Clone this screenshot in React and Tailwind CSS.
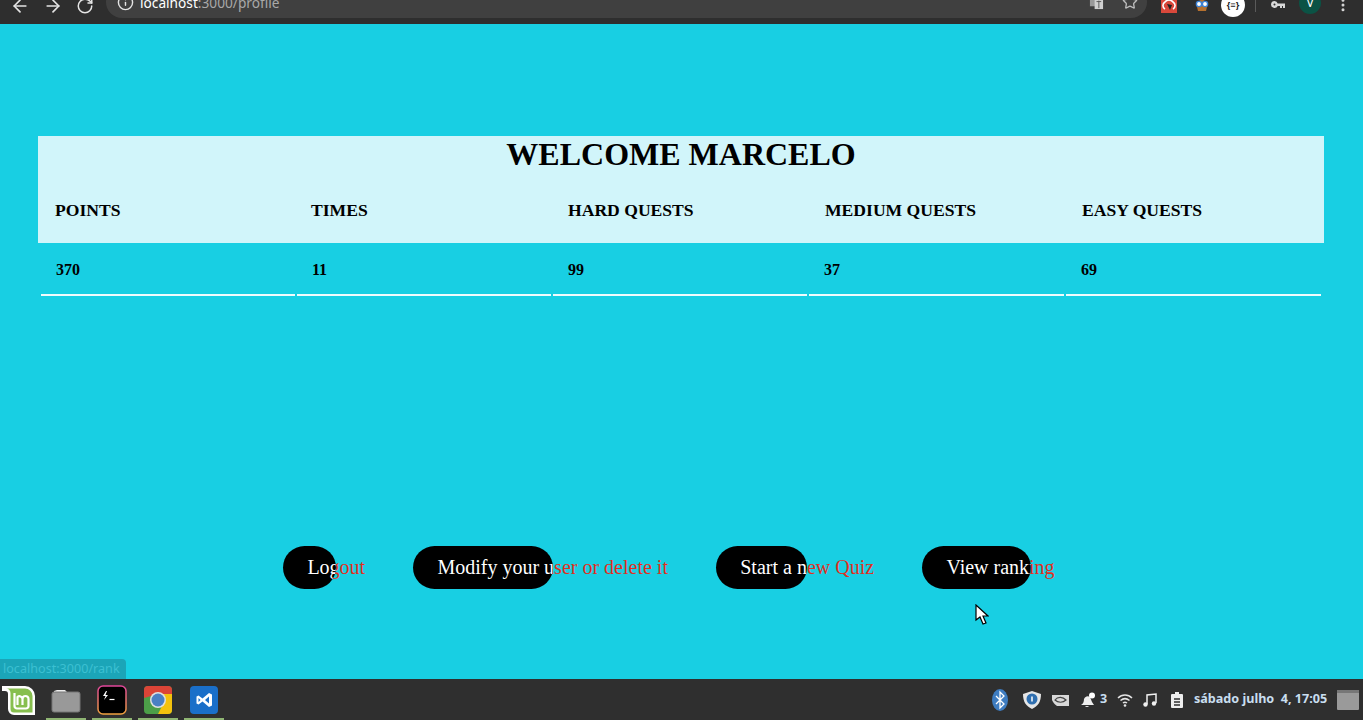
import { ArrowLeft, ArrowRight, RotateCw, Info, Star, MoreVertical } from 'lucide-react';

const sans = 'font-["Noto_Sans",sans-serif]';

const stats = [
  { label: 'POINTS', value: '370' },
  { label: 'TIMES', value: '11' },
  { label: 'HARD QUESTS', value: '99' },
  { label: 'MEDIUM QUESTS', value: '37' },
  { label: 'EASY QUESTS', value: '69' },
];

const buttons = [
  { text: 'Logout', fill: 'w-1/2' },
  { text: 'Modify your user or delete it', fill: 'w-1/2' },
  { text: 'Start a new Quiz', fill: 'w-1/2' },
  { text: 'View ranking', fill: 'w-[109px]' },
];

const BrowserBar = () => (
  <div className="h-6 shrink-0 bg-[#2e2e2e] flex items-start overflow-hidden text-[#e4e4e4]">
    <div className="flex items-center gap-[13px] pl-[10px] w-[106px] -mt-[4px]">
      <ArrowLeft size={20} strokeWidth={2} />
      <ArrowRight size={20} strokeWidth={2} />
      <RotateCw size={18} strokeWidth={2} />
    </div>
    <div className="w-[1041px] h-[32px] -mt-[14px] bg-[#404040] rounded-full flex items-center pl-[11px] pr-[9px]">
      <Info size={17} strokeWidth={2} />
      <span className={`ml-[6px] mt-[2px] text-[13.7px] ${sans} text-white`}>
        localhost<span className="text-[#a8a8a8]">:3000/profile</span>
      </span>
      <div className="ml-auto flex items-center gap-[18px] text-[#bdbdbd]">
        <svg width="15" height="15" viewBox="0 0 16 16">
          <rect x="1" y="1" width="9" height="11" fill="#9a9a9a" />
          <rect x="6" y="4" width="9" height="11" fill="#d0d0d0" />
          <path d="M8 7h5M10.5 6v8" stroke="#555" strokeWidth="1" />
        </svg>
        <Star size={16} strokeWidth={2} />
      </div>
    </div>
    <div className="flex items-center -mt-[4px] h-[18px] pl-[14px]">
      <svg width="16" height="16" viewBox="0 0 16 16">
        <rect width="16" height="16" fill="#d9483b" />
        <path d="M4 12a4 4 0 0 1 0-7 5 5 0 0 1 8 0 4 4 0 0 1 0 7" fill="none" stroke="#fff" strokeWidth="1.600" />
        <path d="M6 7l5 1-2 5z" fill="#222" />
      </svg>
      <svg width="16" height="16" viewBox="0 0 16 16" className="ml-[17px]">
        <path d="M2 6l6-4 6 4-2 8H4z" fill="#b5702e" />
        <circle cx="5" cy="7" r="2.600" fill="#fff" stroke="#3b82d6" strokeWidth="1.400" />
        <circle cx="11" cy="7" r="2.600" fill="#fff" stroke="#3b82d6" strokeWidth="1.400" />
      </svg>
      <div className={`ml-[11px] w-6 h-6 rounded-full bg-white text-[#222] flex items-center justify-center text-[9px] font-bold ${sans}`}>
        {'{≡}'}
      </div>
      <div className="ml-[10px] w-px h-[14px] bg-[#5a5a5a]" />
      {/* key */}
      <svg width="14" height="10" viewBox="0 0 14 10" className="ml-[15px] text-[#d8d8d8]">
        <path d="M3.500 1a3.500 3.500 0 1 0 3.200 5H9v2h2V6h1v2h2V3.500H6.700A3.500 3.500 0 0 0 3.500 1zm0 2.500a1 1 0 1 1 0 2 1 1 0 0 1 0-2z" fill="currentColor" fillRule="evenodd" />
      </svg>
      <div className={`ml-[14px] w-[22px] h-[22px] -mt-[4px] rounded-full bg-[#0b5345] text-white flex items-center justify-center text-[12px] ${sans}`}>
        V
      </div>
      <MoreVertical size={16} strokeWidth={2.500} className="ml-[14px] text-[#d8d8d8]" />
    </div>
  </div>
);

const SplitButton = ({ text, fill }) => (
  <div className="relative px-6 py-[10px] text-[20px] leading-[23px] text-[#e0301e] whitespace-nowrap">
    {text}
    <div className={`absolute inset-y-0 left-0 ${fill} bg-black rounded-[22px] overflow-hidden text-white px-6 py-[10px]`}>
      {text}
    </div>
  </div>
);

const MintLogo = () => (
  <svg width="33" height="30" viewBox="0 0 33 30">
    <path d="M0 1h23a10 10 0 0 1 10 10v19H12a6 6 0 0 1-6-6V9a3 3 0 0 0-3-3H0z" fill="#fff" />
    <path d="M4 3.500h19a7.500 7.500 0 0 1 7.500 7.500v16.500H12a3.500 3.500 0 0 1-3.500-3.500V8A4.500 4.500 0 0 0 4 3.500z" fill="#87bf4f" />
    <path d="M12.500 8v13a2.500 2.500 0 0 0 2.500 2.500h9a2.500 2.500 0 0 0 2.500-2.500v-7a3 3 0 0 0-6 0v6m0-6a3 3 0 0 0-5 -2v8" fill="none" stroke="#fff" strokeWidth="2.200" />
  </svg>
);

const Launcher = ({ children }) => (
  <div className="relative w-10 h-[41px] flex items-center justify-center">
    {children}
    <div className="absolute bottom-0 inset-x-0 h-[2px] bg-[#8fb573]" />
  </div>
);

const Taskbar = () => (
  <div className={`h-[41px] shrink-0 bg-[#2f2f2f] flex items-center text-[#c9deef] ${sans}`}>
    <div className="w-[46px] pl-[2px] flex items-center">
      <MintLogo />
    </div>
    <div className="flex gap-[6px]">
      <Launcher>
        <svg width="30" height="26" viewBox="0 0 30 26">
          <path d="M3 4l3-1h8l2 2H3z" fill="#eee" />
          <rect x="1" y="5" width="28" height="20" rx="2" fill="#999" stroke="#777" />
        </svg>
      </Launcher>
      <Launcher>
        <svg width="30" height="30" viewBox="0 0 30 30">
          <defs>
            <linearGradient id="termBorder" x1="0" y1="0" x2="0" y2="1">
              <stop offset="0" stopColor="#e0459a" />
              <stop offset="1" stopColor="#f0a23e" />
            </linearGradient>
          </defs>
          <rect x="1" y="1" width="28" height="28" rx="5" fill="#000" stroke="url(#termBorder)" strokeWidth="1.500" />
          <path d="M9 6L6 11h2.500L7 15l4-5H8.500L10 6z" fill="#fff" />
          <path d="M12.500 14.500h5" stroke="#fff" strokeWidth="1.200" />
        </svg>
      </Launcher>
      <Launcher>
        <svg width="28" height="28" viewBox="0 0 28 28">
          <rect width="28" height="28" rx="4" fill="#4c9f48" />
          <path d="M0 12V4a4 4 0 0 1 4-4h20a4 4 0 0 1 4 4v4H14z" fill="#db4437" />
          <path d="M14 8h14v16a4 4 0 0 1-4 4h-10l5-10z" fill="#f4c20d" />
          <circle cx="14" cy="14" r="8" fill="#e0e0e0" />
          <circle cx="14" cy="14" r="6.500" fill="#4a80c4" />
        </svg>
      </Launcher>
      <Launcher>
        <svg width="28" height="28" viewBox="0 0 28 28">
          <rect width="28" height="28" rx="4" fill="#1a6fc9" />
          <path d="M19 7l3 1.500v11L19 21l-6.500-5.500L8.500 18.500l-2-1v-7l2-1 4 3zM19 10.500L15 14l4 3.500zM8.500 12v4l2-2z" fill="#fff" fillRule="evenodd" />
        </svg>
      </Launcher>
    </div>
    <div className="ml-auto flex items-center pr-[4px]">
      <svg width="16" height="22" viewBox="0 0 16 22">
        <ellipse cx="8" cy="11" rx="8" ry="11" fill="#3e7cc0" />
        <path d="M4 7l8 8-4 4V3l4 4-8 8" fill="none" stroke="#fff" strokeWidth="1.300" />
      </svg>
      <svg width="20" height="20" viewBox="0 0 20 20" className="ml-[14px]">
        <path d="M10 1l9 3c0 8-3 12-9 15C4 16 1 12 1 4z" fill="#e6e6e6" />
        <circle cx="10" cy="9" r="5.500" fill="#2f6fb0" />
        <path d="M10 6.500v5" stroke="#fff" strokeWidth="1.500" />
      </svg>
      <svg width="17" height="12" viewBox="0 0 17 12" className="ml-[10px]">
        <path d="M0 1h17v11H5C2 10 1 8 0 6z" fill="#d8d8d8" />
        <path d="M3 6c3-4 8-3 11 0-3 3-8 3-11 0z" fill="none" stroke="#444" strokeWidth="1.200" />
      </svg>
      <svg width="16" height="16" viewBox="0 0 16 16" className="ml-[11px]">
        <path d="M1 13c2-1 3-3 3-6a4 4 0 0 1 6-2l2 5 2 3z" fill="#eee" />
        <path d="M5 14a2.500 2.500 0 0 0 4 0z" fill="#eee" />
        <circle cx="12" cy="3.500" r="3" fill="#fff" />
      </svg>
      <span className="ml-[4px] w-[7px] text-[12.600px] font-bold">3</span>
      <svg width="16" height="14" viewBox="0 0 16 14" className="ml-[10px]">
        <path d="M1 5c4-4 10-4 14 0M3.500 7.500c3-2.500 6-2.500 9 0M6 10c1.200-1 2.800-1 4 0" fill="none" stroke="#e4e4e4" strokeWidth="1.500" />
        <circle cx="8" cy="12.500" r="1.300" fill="#e4e4e4" />
      </svg>
      <svg width="14" height="14" viewBox="0 0 14 14" className="ml-[10px]">
        <path d="M4 11V2l9-1v9" fill="none" stroke="#f0f0f0" strokeWidth="1.500" />
        <circle cx="2.500" cy="11.500" r="2.200" fill="#f0f0f0" />
        <circle cx="11" cy="10.500" r="2.200" fill="#f0f0f0" />
      </svg>
      <svg width="12" height="16" viewBox="0 0 12 16" className="ml-[14px]">
        <path d="M4 0h4v2h3a1 1 0 0 1 1 1v12a1 1 0 0 1-1 1H1a1 1 0 0 1-1-1V3a1 1 0 0 1 1-1h3z" fill="#eee" />
        <path d="M3 7h6M3 10h6M3 13h6" stroke="#2f2f2f" strokeWidth="1.500" />
      </svg>
      <span className="ml-[11px] w-[133px] text-[12.600px] font-bold whitespace-pre">sábado julho  4, 17:05</span>
      <svg width="22" height="20" viewBox="0 0 22 20" className="ml-[10px]">
        <rect width="22" height="20" rx="1" fill="#9a9a9a" />
        <rect width="22" height="3" fill="#777" />
      </svg>
    </div>
  </div>
);

export default function App() {
  return (
    <div className='h-[720px] flex flex-col overflow-hidden font-["Liberation_Serif",serif]'>
      <BrowserBar />

      <main className="relative flex-1 bg-[#18cfe3] pt-[112px] px-[38px] text-black">
        <section className="w-[1286px] bg-[#d1f5fa]">
          <h1 className="text-[32px] leading-[37px] font-bold text-center">WELCOME MARCELO</h1>
          <div className="grid grid-cols-[256px_257px_257px_257px_257px] h-[70px] items-center pt-[4px]">
            {stats.map(s => (
              <div key={s.label} className="pl-[17px] text-[17.6px] font-bold">{s.label}</div>
            ))}
          </div>
        </section>

        <div className="w-[1286px] pl-[3px] grid grid-cols-[256px_256px_256px_257px_257px]">
          {stats.map(s => (
            <div key={s.label} className="h-[53px] mr-[2px] pl-[15px] pt-[2px] flex items-center font-bold border-b-2 border-[#f0fbfd]">
              {s.value}
            </div>
          ))}
        </div>

        <div className="mt-[250px] flex justify-center gap-[24.3px] pr-[1px]">
          {buttons.map(b => (
            <SplitButton key={b.text} text={b.text} fill={b.fill} />
          ))}
        </div>

        {/* mouse pointer */}
        <svg width="14" height="21" viewBox="0 0 14 21" className="absolute left-[975px] top-[580px]">
          <path d="M1 1v15l4-3 3 7 3-1-3-7h5z" fill="#fff" stroke="#000" strokeWidth="1.200" />
        </svg>

        {/* link preview bubble */}
        <div className={`absolute left-0 bottom-0 h-5 w-[126px] rounded-tr-[4px] bg-[#1ba5b8] pl-[3px] text-[12.600px] leading-5 text-[#3cc0d2] ${sans}`}>
          localhost:3000/rank
        </div>
      </main>

      <Taskbar />
    </div>
  );
}
